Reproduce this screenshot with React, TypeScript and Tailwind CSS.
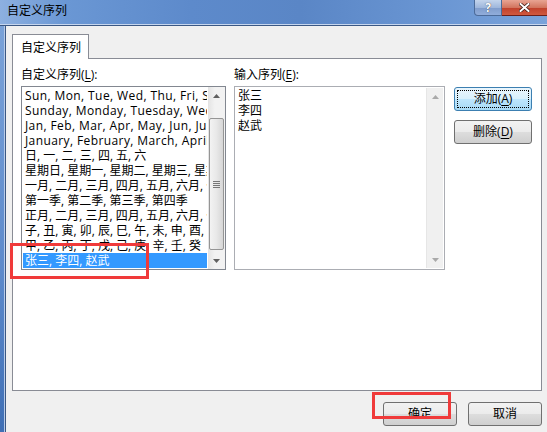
import type React from "react";

const FONT = '"Open Sans", "Noto Sans CJK SC", sans-serif';

const customLists: string[] = [
  "Sun, Mon, Tue, Wed, Thu, Fri, Sat",
  "Sunday, Monday, Tuesday, Wednesday, Thursday, Friday, Saturday",
  "Jan, Feb, Mar, Apr, May, Jun, Jul, Aug, Sep, Oct, Nov, Dec",
  "January, February, March, April, May, June, July, August, September, October, November, December",
  "日, 一, 二, 三, 四, 五, 六",
  "星期日, 星期一, 星期二, 星期三, 星期四, 星期五, 星期六",
  "一月, 二月, 三月, 四月, 五月, 六月, 七月, 八月, 九月, 十月, 十一月, 十二月",
  "第一季, 第二季, 第三季, 第四季",
  "正月, 二月, 三月, 四月, 五月, 六月, 七月, 八月, 九月, 十月, 十一月, 腊月",
  "子, 丑, 寅, 卯, 辰, 巳, 午, 未, 申, 酉, 戌, 亥",
  "甲, 乙, 丙, 丁, 戊, 己, 庚, 辛, 壬, 癸",
  "张三, 李四, 赵武",
];

const entries = ["张三", "李四", "赵武"];

// small scrollbar arrow
const Arrow: React.FC<{ up?: boolean; dim?: boolean }> = ({ up, dim }) => (
  <div className="h-[17px] flex items-center justify-center">
    <svg width="7" height="4" viewBox="0 0 7 4">
      {up ? (
        <path d="M0 4 L3.5 0 L7 4 Z" fill={dim ? "#a9a9a9" : "#606060"} />
      ) : (
        <path d="M0 0 L3.5 4 L7 0 Z" fill={dim ? "#a9a9a9" : "#606060"} />
      )}
    </svg>
  </div>
);

const Btn: React.FC<{
  children: React.ReactNode;
  primary?: boolean;
  className?: string;
}> = ({ children, primary, className }) => (
  <div
    className={`relative flex items-center justify-center rounded-[3px] border text-[12px] leading-none text-black ${
      primary
        ? "border-[#3c7fb1] bg-[linear-gradient(#eaf6fd_0%,#d9f0fc_50%,#bee6fd_51%,#a7d9f5_100%)]"
        : "border-[#707070] bg-[linear-gradient(#f2f2f2_0%,#ebebeb_50%,#dddddd_51%,#cfcfcf_100%)]"
    } ${className ?? ""}`}
  >
    {primary && (
      <div className="absolute inset-[2px] border border-dotted border-black" />
    )}
    <span className="relative">{children}</span>
  </div>
);

const U: React.FC<{ children: React.ReactNode }> = ({ children }) => (
  <span className="underline underline-offset-2">{children}</span>
);

export default function App() {
  return (
    <div
      className="relative w-[547px] h-[432px] overflow-hidden bg-[#f0f0f0] text-black"
      style={{ fontFamily: FONT }}
    >
      {/* title bar */}
      <div className="h-[24px] flex items-start bg-[linear-gradient(90deg,#8db0e0_0%,#6a97d4_12%,#5d8acb_35%,#5a86c6_55%,#6a96d3_80%,#7aa3da_100%)]">
        <span className="ml-[7px] mt-[3px] text-[12px] leading-[15px]">自定义序列</span>
        <div className="ml-auto flex">
          <div className="w-[28px] h-[16px] rounded-bl-[4px] border border-t-0 border-[#4c6b99] bg-[linear-gradient(#c3d4ec_0%,#9fb7dc_50%,#7f9ccb_51%,#91addb_100%)] flex items-center justify-center text-white text-[12px] font-bold leading-none [text-shadow:0_0_1px_#222]">
            ?
          </div>
          <div className="w-[45px] h-[16px] border-b border-[#6b1f1a] bg-[linear-gradient(#e8a493_0%,#d2755f_50%,#c0402b_51%,#d0593f_100%)] flex items-center justify-center">
            <svg width="11" height="9" viewBox="0 0 11 9">
              <path
                d="M1.5 1 L9.5 8 M9.5 1 L1.5 8"
                stroke="#3b1812"
                strokeWidth="3.4"
                strokeLinecap="square"
              />
              <path
                d="M1.5 1 L9.5 8 M9.5 1 L1.5 8"
                stroke="#ffffff"
                strokeWidth="2"
                strokeLinecap="square"
              />
            </svg>
          </div>
        </div>
      </div>
      <div className="h-px bg-[#c6d6ee]" />
      <div className="h-px bg-[#3b5884]" />

      <div className="flex h-[406px]">
        {/* left window frame */}
        <div className="w-[4px] bg-[linear-gradient(#7aa2d8,#5d8acb_60%,#3f6fb5)]" />
        <div className="w-px bg-[#b8cbe8]" />
        <div className="w-px bg-[#3b5884]" />

        {/* client area */}
        <div className="flex-1 flex flex-col pt-[8px] pl-[6px] pr-[5px]">
          {/* tab header */}
          <div className="relative z-10 -mb-px w-[77px] h-[25px] border border-b-0 border-[#898c95] bg-white flex items-center pl-[8px] text-[12px] leading-[15px]">
            自定义序列
          </div>

          {/* tab panel */}
          <div className="w-[530px] h-[333px] border border-[#898c95] bg-white px-[8px] pt-[8px] flex">
            {/* custom lists */}
            <div className="w-[205px] flex flex-col">
              <div className="text-[12px] leading-[15px]">
                自定义序列(<U>L</U>):
              </div>
              <div className="mt-[4px] h-[184px] border border-[#828790] bg-white flex">
                <div className="flex-1 min-w-0 p-px">
                  {customLists.map((item, i) => {
                    const sel = i === customLists.length - 1;
                    const latin = i < 4;
                    return (
                      <div
                        key={i}
                        className={`h-[15px] pl-[2px] text-[12px] leading-[15px] whitespace-nowrap overflow-hidden ${
                          latin ? "tracking-[0.4px]" : ""
                        } ${sel ? "bg-[#3399ff] text-white" : ""}`}
                      >
                        {item}
                      </div>
                    );
                  })}
                </div>
                <div className="w-[17px] flex flex-col bg-[linear-gradient(90deg,#e3e3e3,#f2f2f2_40%,#f2f2f2)]">
                  <Arrow up />
                  <div className="h-[14px]" />
                  <div className="mx-px h-[132px] rounded-[2px] border border-[#959595] bg-[linear-gradient(90deg,#f3f3f3,#e8e8e8_50%,#d6d6d6)] flex items-center justify-center">
                    <div className="flex flex-col gap-[1px]">
                      <div className="w-[7px] h-px bg-[#777]" />
                      <div className="w-[7px] h-px bg-[#777]" />
                      <div className="w-[7px] h-px bg-[#777]" />
                      <div className="w-[7px] h-px bg-[#777]" />
                    </div>
                  </div>
                  <div className="flex-1" />
                  <Arrow />
                </div>
              </div>
            </div>

            {/* entries */}
            <div className="ml-[8px] w-[211px] flex flex-col">
              <div className="text-[12px] leading-[15px]">
                输入序列(<U>E</U>):
              </div>
              <div className="mt-[4px] h-[184px] border border-[#abadb3] bg-white flex">
                <div className="flex-1 min-w-0 pl-[3px] pt-px">
                  {entries.map((e) => (
                    <div key={e} className="h-[15px] text-[12px] leading-[15px]">
                      {e}
                    </div>
                  ))}
                </div>
                <div className="w-[17px] my-px mr-px flex flex-col justify-between bg-[#f0f0f0] border-l border-[#e6e6e6]">
                  <Arrow up dim />
                  <Arrow dim />
                </div>
              </div>
            </div>

            {/* buttons */}
            <div className="ml-[9px] pt-[20px] flex flex-col gap-[9px]">
              <Btn primary className="w-[78px] h-[24px]">
                添加(<U>A</U>)
              </Btn>
              <Btn className="w-[78px] h-[24px]">
                删除(<U>D</U>)
              </Btn>
            </div>
          </div>

          {/* dialog buttons */}
          <div className="mt-[11px] flex justify-end gap-[11px]">
            <Btn className="w-[74px] h-[24px]">确定</Btn>
            <Btn className="w-[74px] h-[24px]">取消</Btn>
          </div>
        </div>
      </div>

      {/* red annotation boxes */}
      <div className="absolute left-[10px] top-[243px] w-[139px] h-[36px] border-[3px] border-[#f03a3a]" />
      <div className="absolute left-[372px] top-[392px] w-[79px] h-[27px] border-[3px] border-[#f03a3a]" />
    </div>
  );
}
